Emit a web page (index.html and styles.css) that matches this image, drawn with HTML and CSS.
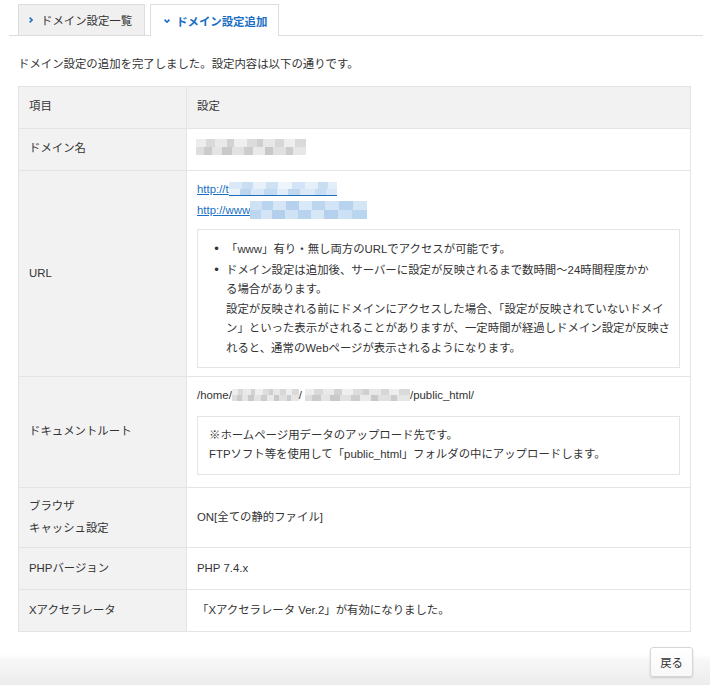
FILE: index.html
```html
<!DOCTYPE html>
<html lang="ja">
<head>
  <meta charset="UTF-8" />
  <meta name="viewport" content="width=device-width, initial-scale=1.0"/>
  <title>ドメイン設定追加</title>
  <link rel="stylesheet" href="styles.css">
</head>
<body>

<nav class="tabs">
  <a class="tab" href="#">
    <svg class="chev" width="4" height="6" viewBox="0 0 4 6"><path d="M0.6 0.6 L3.2 3 L0.6 5.4" fill="none" stroke="#1a6fc4" stroke-width="1.6"/></svg>
    ドメイン設定一覧
  </a>
  <a class="tab tab-active" href="#">
    <svg class="chev" width="6" height="4" viewBox="0 0 6 4"><path d="M0.6 0.6 L3 3.2 L5.4 0.6" fill="none" stroke="#1a6fc4" stroke-width="1.6"/></svg>
    ドメイン設定追加
  </a>
</nav>

<main class="content">
  <p class="lead">ドメイン設定の追加を完了しました。設定内容は以下の通りです。</p>

  <table class="info">
    <colgroup>
      <col class="col-label">
      <col>
    </colgroup>
    <tr class="head">
      <th>項目</th>
      <th>設定</th>
    </tr>
    <tr>
      <th>ドメイン名</th>
      <td><span class="blur blur-gray blur-domain"></span></td>
    </tr>
    <tr>
      <th>URL</th>
      <td class="url-cell">
        <a class="url" href="#">http://t<span class="blur blur-blue blur-url1"></span></a>
        <a class="url" href="#">http://www<span class="blur blur-blue2 blur-url2"></span></a>
        <div class="note">
          <ul>
            <li>「www」有り・無し両方のURLでアクセスが可能です。</li>
            <li>ドメイン設定は追加後、サーバーに設定が反映されるまで数時間〜24時間程度かか<br>る場合があります。<br>設定が反映される前にドメインにアクセスした場合、「設定が反映されていないドメイ<br>ン」といった表示がされることがありますが、一定時間が経過しドメイン設定が反映さ<br>れると、通常のWebページが表示されるようになります。</li>
          </ul>
        </div>
      </td>
    </tr>
    <tr>
      <th>ドキュメントルート</th>
      <td class="doc-cell">
        <div class="path">/home/<span class="blur blur-gray blur-user"></span>/<span class="blur blur-gray blur-dir"></span>/public_html/</div>
        <div class="note note-doc">
          ※ホームページ用データのアップロード先です。<br>
          FTPソフト等を使用して「public_html」フォルダの中にアップロードします。
        </div>
      </td>
    </tr>
    <tr>
      <th>ブラウザ<br>キャッシュ設定</th>
      <td>ON[全ての静的ファイル]</td>
    </tr>
    <tr>
      <th>PHPバージョン</th>
      <td>PHP 7.4.x</td>
    </tr>
    <tr>
      <th>Xアクセラレータ</th>
      <td>「Xアクセラレータ Ver.2」が有効になりました。</td>
    </tr>
  </table>
</main>

<footer class="footer">
  <button class="btn" type="button">戻る</button>
</footer>

</body>
</html>
```

FILE: styles.css
```css
body {
  margin: 0;
  font-family: "Liberation Sans", "Noto Sans CJK JP", sans-serif;
  font-size: 11.4px;
  color: #333;
  background: #fff;
}

/* tabs */
.tabs {
  display: flex;
  align-items: flex-end;
  gap: 5px;
  margin: 0 7px 0 9px;
  padding: 4px 0 0 9px;
  border-bottom: 1px solid #ddd;
}

.tab {
  display: flex;
  align-items: center;
  gap: 8px;
  box-sizing: border-box;
  height: 31px;
  padding: 0 12px 0 10px;
  border: 1px solid #ddd;
  border-bottom: none;
  background: #f0f0f0;
  color: #333;
  text-decoration: none;
}

.tab-active {
  height: 32px;
  margin-bottom: -1px;
  gap: 6px;
  padding: 0 11px 0 13px;
  background: #fff;
  color: #1a6fc4;
  font-weight: bold;
}

.chev {
  display: block;
}

/* content */
.content {
  padding: 0 19px 0 18px;
}

.lead {
  margin: 18px 0 10px;
  line-height: 21.7px;
}

.info {
  width: 100%;
  table-layout: fixed;
  border-collapse: collapse;
  border: 1px solid #e4e4e4;
  line-height: 21.7px;
}

.col-label {
  width: 168px;
}

.info th,
.info td {
  height: 42px;
  box-sizing: border-box;
  padding: 8px 10px;
  border: 1px solid #e4e4e4;
  text-align: left;
  vertical-align: middle;
}

.info th {
  font-weight: normal;
  background: #f2f2f2;
}

.info .head th {
  background: #f2f2f2;
}

.url-cell {
  padding-top: 10px;
}

.url {
  display: block;
  color: #1a6fc4;
  text-decoration: underline;
}

.note {
  margin: 7px 0 0;
  padding: 9px 4px 9px 10px;
  border: 1px solid #e4e4e4;
  background: #fff;
  line-height: 19.5px;
}

.note ul {
  margin: 0;
  padding-left: 18px;
}

.note li::marker {
  content: "•  ";
  font-size: 13px;
}

.doc-cell {
  padding-top: 10px;
}

.note-doc {
  margin: 9px 0 4px;
  padding: 9px 11px;
  line-height: 19.5px;
}

/* blurred (masked) values */
.blur {
  display: inline-block;
  vertical-align: -3px;
  height: 14px;
}

.blur-gray {
  background:
    linear-gradient(90deg, #ededed 0 9%, #d9d9d9 9% 17%, #e9e9e9 17% 28%, #d2d2d2 28% 35%, #efefef 35% 46%, #dcdcdc 46% 55%, #cfcfcf 55% 61%, #e7e7e7 61% 72%, #d7d7d7 72% 80%, #eeeeee 80% 90%, #dadada 90%) top / 100% 50% no-repeat,
    linear-gradient(90deg, #dedede 0 7%, #cbcbcb 7% 15%, #e4e4e4 15% 24%, #c9c9c9 24% 33%, #e2e2e2 33% 44%, #cdcdcd 44% 52%, #e9e9e9 52% 63%, #c8c8c8 63% 70%, #e0e0e0 70% 82%, #cccccc 82% 88%, #e6e6e6 88%) bottom / 100% 50% no-repeat;
}

.blur-blue {
  background:
    linear-gradient(#1a6fc4, #1a6fc4) bottom / 100% 1px no-repeat,
    linear-gradient(90deg, #dbe9f7 0 12%, #c9def3 12% 22%, #e8f1fa 22% 34%, #cfe2f4 34% 45%, #edf4fb 45% 58%, #d2e4f5 58% 70%, #e6f0fa 70% 82%, #c7ddf2 82% 92%, #e3eef9 92%) top / 100% 50% no-repeat,
    linear-gradient(90deg, #e9f2fa 0 10%, #bcd6ef 10% 20%, #d8e8f6 20% 32%, #c2daf1 32% 44%, #e0edf8 44% 55%, #bfd8f0 55% 66%, #dbe9f7 66% 80%, #c5dcf2 80% 90%, #d9e8f6 90%) bottom / 100% 50% no-repeat;
}

.blur-blue2 {
  background:
    linear-gradient(90deg, #cfe2f4 0 10%, #b9d4ee 10% 20%, #d6e6f6 20% 31%, #b5d1ed 31% 42%, #dae9f7 42% 53%, #bcd6ef 53% 64%, #d2e4f5 64% 76%, #b7d3ee 76% 88%, #d4e5f5 88%) top / 100% 50% no-repeat,
    linear-gradient(90deg, #bdd6ef 0 9%, #d3e4f5 9% 19%, #b3cfec 19% 30%, #d0e3f4 30% 41%, #b8d3ee 41% 52%, #d6e7f6 52% 63%, #b4d0ec 63% 75%, #cde1f4 75% 87%, #bad5ee 87%) bottom / 100% 50% no-repeat;
}

.blur-domain {
  width: 110px;
  height: 16px;
  margin-left: -1px;
}

.blur-url1 {
  width: 108px;
}

.blur-url2 {
  width: 117px;
  height: 18px;
  vertical-align: -5px;
}

.blur-user {
  width: 67px;
  height: 12px;
  vertical-align: -2px;
}

.blur-dir {
  width: 105px;
  height: 12px;
  vertical-align: -2px;
  margin-left: 3px;
}

/* footer */
.footer {
  display: flex;
  justify-content: flex-end;
  padding: 15px 17px 10px;
  background: linear-gradient(to bottom, #fff 0, #fff 22px, #f7f7f7 28px, #ebebeb 100%);
}

.btn {
  height: 30px;
  padding: 0 9px;
  font-family: inherit;
  font-size: 11.4px;
  color: #333;
  background: linear-gradient(#fff, #f8f8f8);
  border: 1px solid #d6d6d6;
  border-radius: 3px;
  box-shadow: 0 1px 2px rgba(0, 0, 0, 0.15);
  cursor: pointer;
}
```
